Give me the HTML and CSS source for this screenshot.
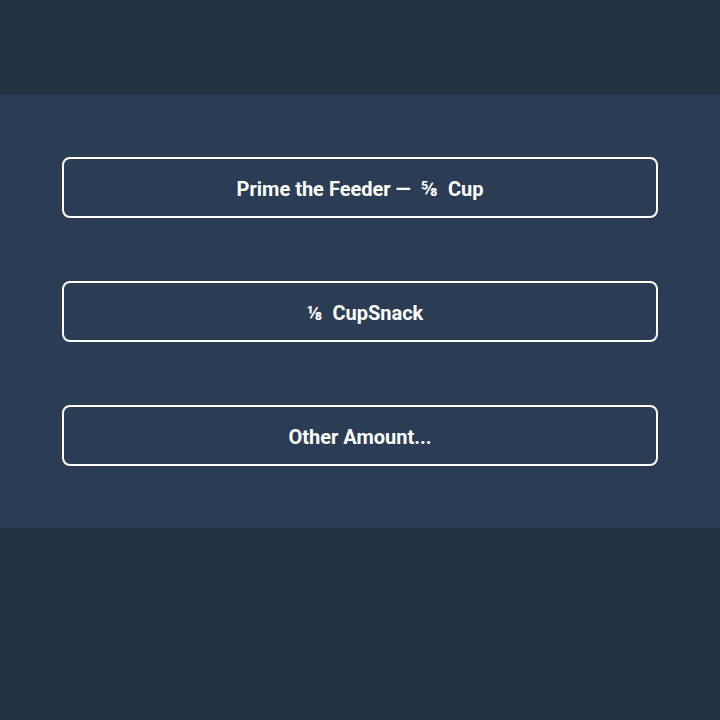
FILE: index.html
```html
<!DOCTYPE html>
<html lang="en">
<head>
    <meta charset="UTF-8">
    <meta name="viewport" content="width=device-width, initial-scale=1.0">
    <title>Feeder</title>
    <link rel="stylesheet" href="styles.css">
</head>
<body>
    <div class="panel">
        <button class="feed-btn">Prime the Feeder —<span class="frac">⅝</span>Cup</button>
        <button class="feed-btn"><span class="frac">⅛</span>CupSnack</button>
        <button class="feed-btn">Other Amount...</button>
    </div>
</body>
</html>
```

FILE: styles.css
```css
body {
    margin: 0;
    background: #253243;
    font-family: Roboto, "Liberation Sans", sans-serif;
    padding-top: 95px;
}

.panel {
    background: #2b3c55;
    padding: 62px;
    display: flex;
    flex-direction: column;
    gap: 63px;
}

.feed-btn {
    height: 61px;
    padding: 2px 0 0;
    background: transparent;
    border: 2px solid #ffffff;
    border-radius: 8px;
    color: #ffffff;
    font-family: Roboto, "Liberation Sans", sans-serif;
    font-size: 20px;
    font-weight: bold;
    cursor: pointer;
}

.frac {
    margin: 0 10px;
}
```
